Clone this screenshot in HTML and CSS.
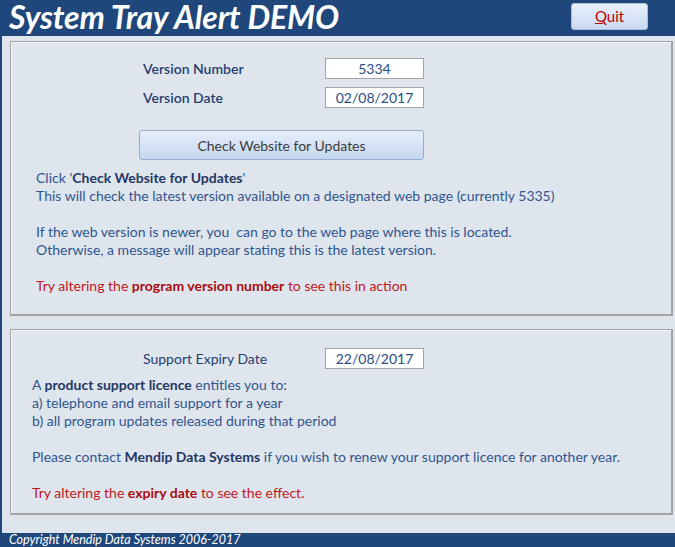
FILE: index.html
```html
<!DOCTYPE html>
<html>
<head>
<meta charset="utf-8">
<link rel="stylesheet" href="styles.css">
</head>
<body>
<div class="window">
  <header class="topbar">
    <h1 class="title">System Tray Alert DEMO</h1>
    <button class="quit"><span class="ul">Q</span>uit</button>
  </header>
  <main class="content">
    <section class="panel panel-version">
      <div class="field">
        <span class="label">Version Number</span>
        <span class="box">5334</span>
      </div>
      <div class="field">
        <span class="label">Version Date</span>
        <span class="box">02/08/2017</span>
      </div>
      <button class="check">Check Website for Updates</button>
      <div class="text">
        <p>Click '<b>Check Website for Updates</b>'</p>
        <p>This will check the latest version available on a designated web page (currently 5335)</p>
        <p class="gap">If the web version is newer, you&nbsp; can go to the web page where this is located.</p>
        <p>Otherwise, a message will appear stating this is the latest version.</p>
        <p class="gap red">Try altering the <b>program version number</b> to see this in action</p>
      </div>
    </section>
    <section class="panel panel-support">
      <div class="field">
        <span class="label">Support Expiry Date</span>
        <span class="box">22/08/2017</span>
      </div>
      <div class="text">
        <p>A <b>product support licence</b> entitles you to:</p>
        <p>a) telephone and email support for a year</p>
        <p>b) all program updates released during that period</p>
        <p class="gap">Please contact <b>Mendip Data Systems</b> if you wish to renew your support licence for another year.</p>
        <p class="gap red">Try altering the <b>expiry date</b> to see the effect.</p>
      </div>
    </section>
  </main>
  <footer class="footer">Copyright Mendip Data Systems 2006-2017</footer>
</div>
</body>
</html>
```
FILE: styles.css
```css
* { box-sizing: border-box; }
html, body { margin: 0; padding: 0; }
body {
  font-family: Lato, "Open Sans", sans-serif;
  background: #dfe5ed;
}
.window {
  width: 675px;
  height: 547px;
  display: flex;
  flex-direction: column;
  overflow: hidden;
}
.topbar {
  height: 36px;
  flex: none;
  background: #1f477b;
  display: flex;
  align-items: flex-start;
  justify-content: space-between;
  padding: 0 27px 0 9px;
}
.title {
  margin: 0;
  font-size: 32px;
  font-weight: 700;
  font-style: italic;
  color: #ffffff;
  line-height: 34px;
  letter-spacing: -0.1px;
  white-space: nowrap;
}
.quit {
  margin-top: 3px;
  width: 77px;
  height: 27px;
  border: 1px solid #a9bedd;
  border-radius: 3px;
  background: linear-gradient(#e9f0fb, #c9d9f1);
  color: #c00000;
  font-family: Lato, sans-serif;
  font-size: 15px;
  padding: 0 0 1px 0;
}
.ul { text-decoration: underline; }
.content {
  flex: 1;
  border-left: 2px solid #1f477b;
  padding: 5px 2px 0 8px;
  display: flex;
  flex-direction: column;
  gap: 13px;
}
.panel {
  border: 1px solid #a3a3a3;
  border-right-width: 2px;
  border-bottom-width: 2px;
  box-shadow: inset 1px 1px 0 #f3f5f8;
  color: #2f568e;
  font-size: 14px;
}
.panel-version {
  height: 275px;
  padding: 16px 0 0 25px;
}
.panel-support {
  height: 186px;
  padding: 18px 0 0 21px;
}
.field {
  display: flex;
  align-items: center;
  height: 21px;
  margin-left: 107px;
  margin-bottom: 8px;
}
.panel-support .field { margin-left: 111px; margin-bottom: 7px; }
.label {
  width: 182px;
  color: #1f3f72;
  font-weight: 600;
}
.panel-support .label { font-weight: 400; }
.box {
  width: 99px;
  height: 21px;
  background: #ffffff;
  border: 1px solid #a3a3a3;
  text-align: center;
  line-height: 19px;
  color: #2a4d85;
}
.check {
  display: block;
  margin: 22px 0 9px 103px;
  width: 285px;
  height: 30px;
  border: 1px solid #93acd3;
  border-radius: 3px;
  background: linear-gradient(#e7eefa, #c5d6ef);
  color: #3d3d3d;
  font-family: Lato, sans-serif;
  font-size: 14px;
  padding: 0;
}
.text p {
  margin: 0;
  line-height: 18px;
  white-space: nowrap;
}
.text p.gap { margin-top: 18px; }
.text b { color: #1f3864; font-weight: 700; }
.text .red { color: #c0181e; }
.text .red b { color: #a80c10; }
.footer {
  height: 14px;
  flex: none;
  background: #1f477b;
  color: #ffffff;
  font-style: italic;
  font-size: 12.5px;
  line-height: 14px;
  padding-left: 9px;
  overflow: hidden;
  white-space: nowrap;
}
```
